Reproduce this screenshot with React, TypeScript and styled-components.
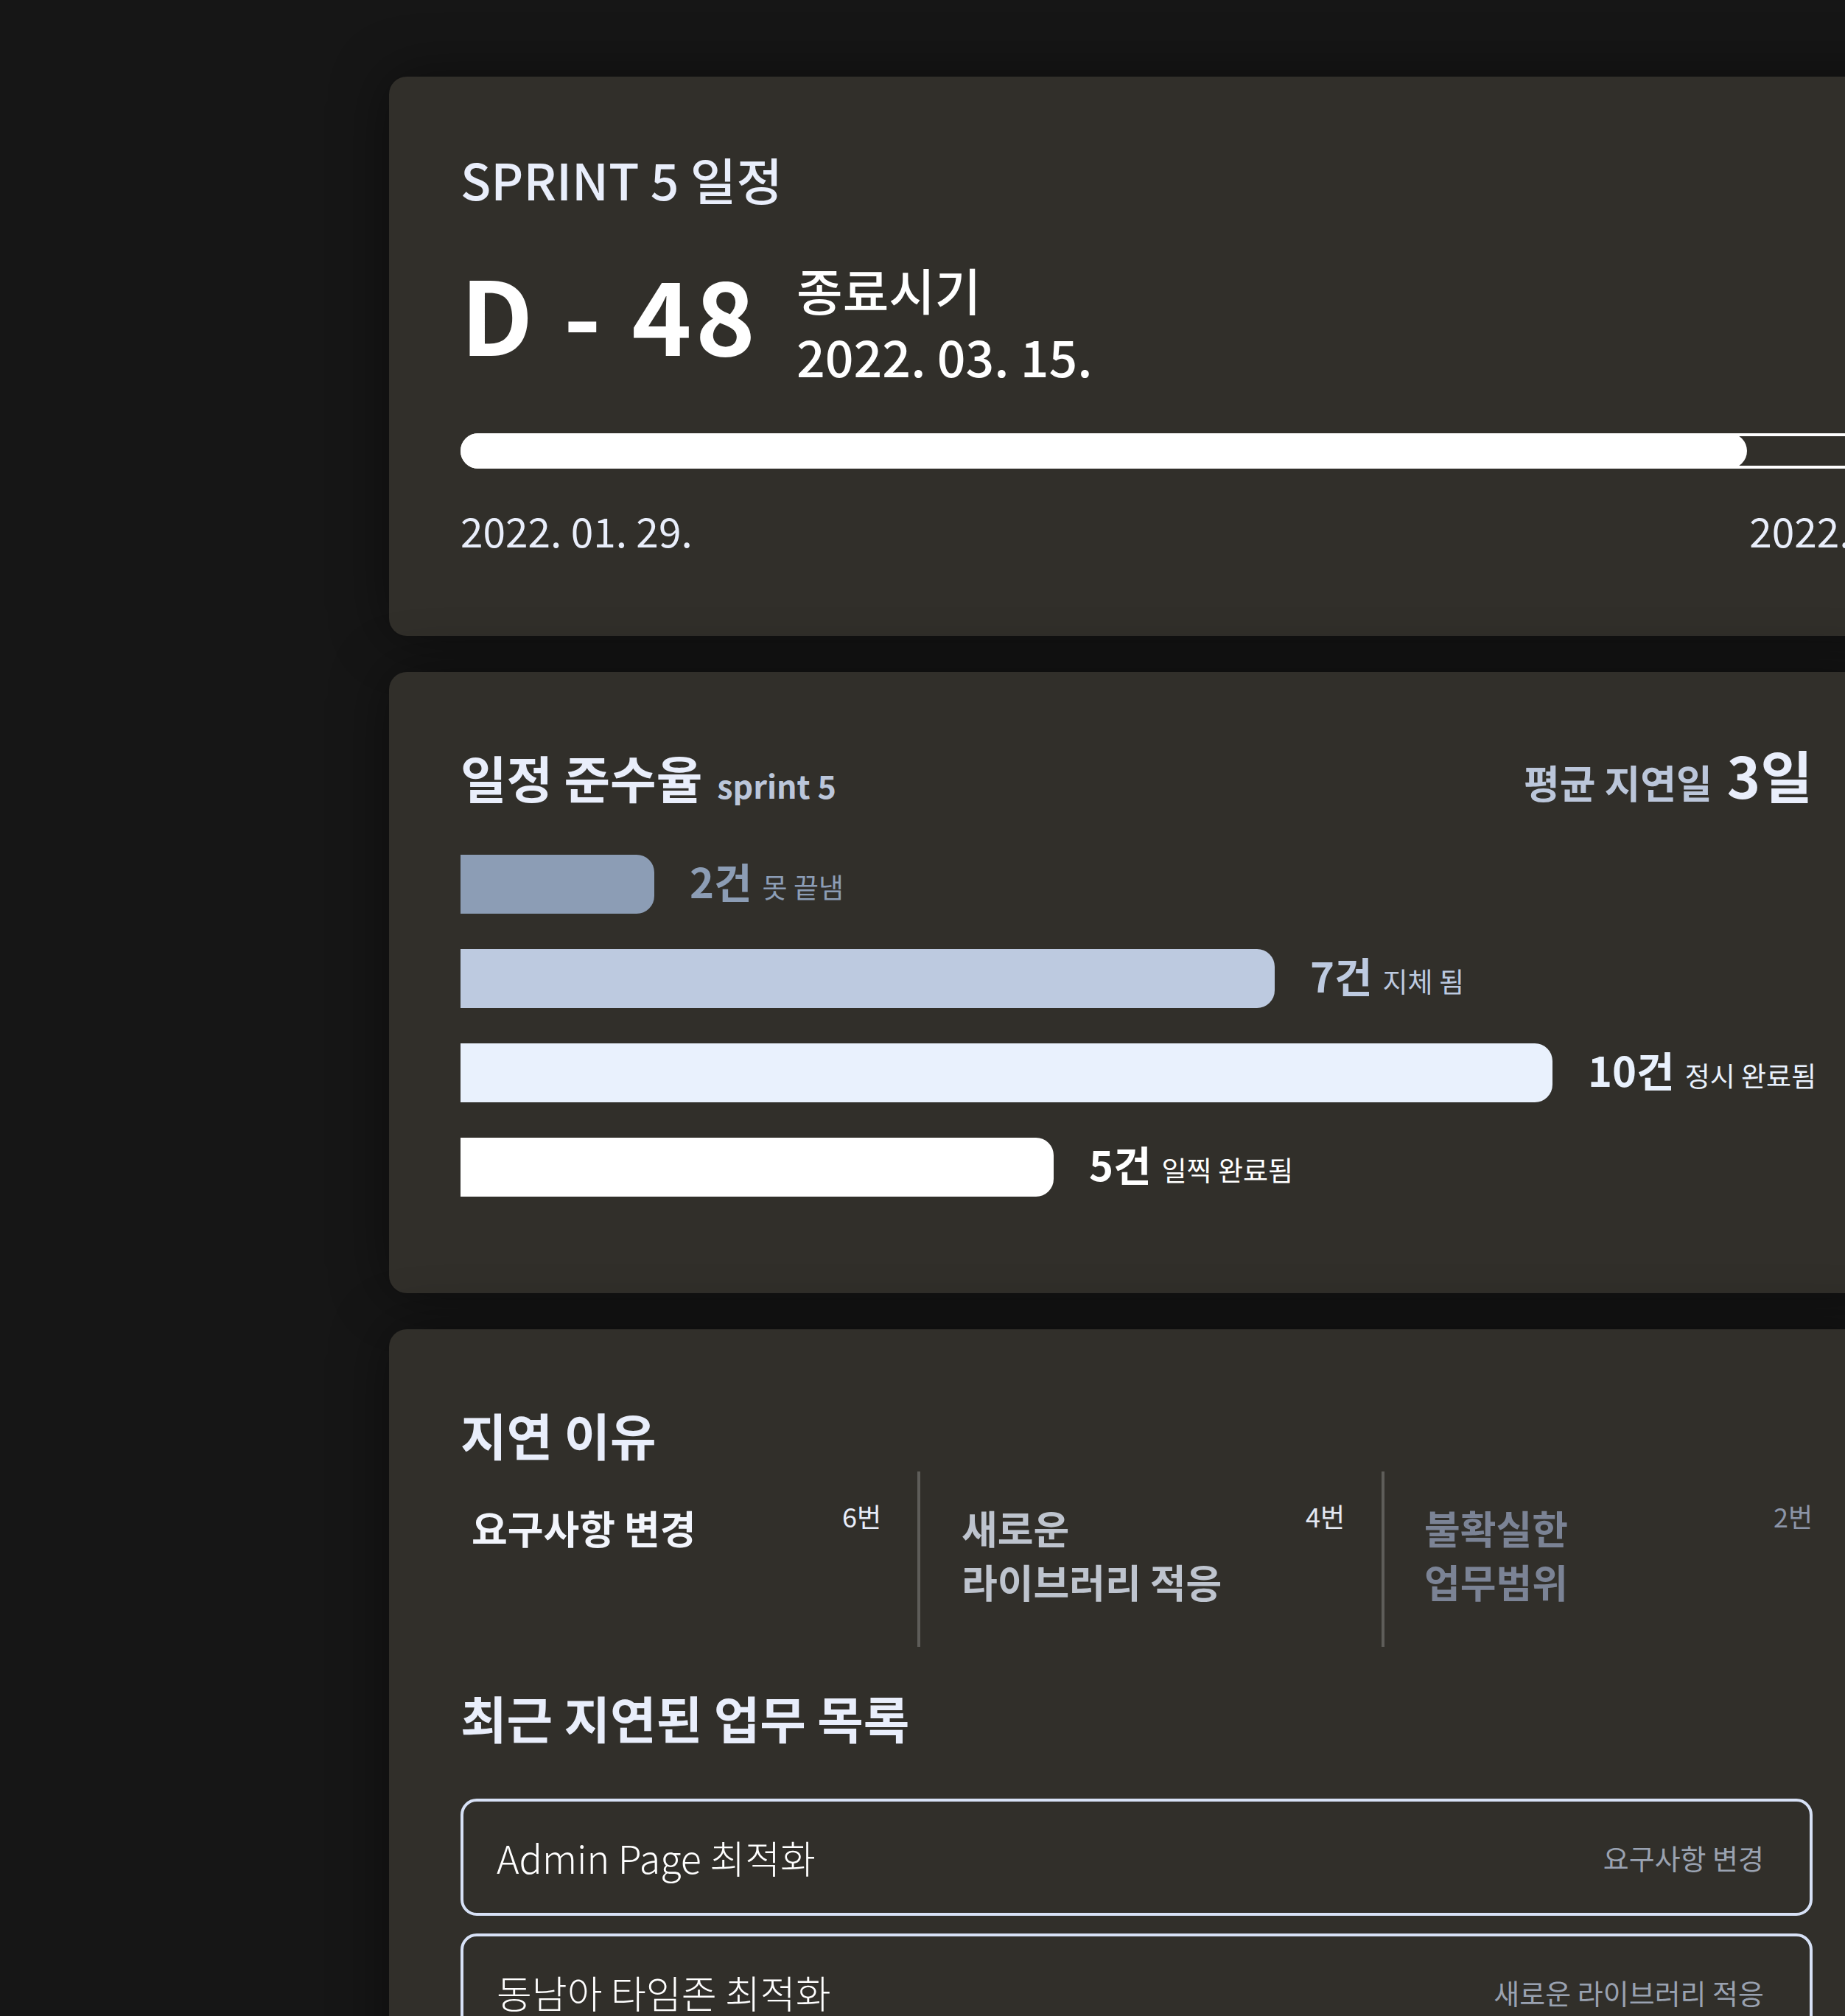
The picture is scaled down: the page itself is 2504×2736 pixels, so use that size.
import React from 'react';
import styled, { createGlobalStyle } from 'styled-components';

const GlobalStyle = createGlobalStyle`
    html, body {
        margin: 0;
        padding: 0;
        background: #161616;
        overflow: hidden;
    }
    body {
        font-family: "Noto Sans CJK KR", "Noto Sans", sans-serif;
    }
`;

interface BarItem {
    count: number;
    label: string;
    width: number;
    color: string;
}

interface Reason {
    lines: string[];
    count: number;
    color: string;
    countColor: string;
}

interface DelayedTask {
    title: string;
    reason: string;
}

const bars: BarItem[] = [
    { count: 2, label: '못 끝냄', width: 263, color: '#8c9db5' },
    { count: 7, label: '지체 됨', width: 1105, color: '#bdcae0' },
    { count: 10, label: '정시 완료됨', width: 1482, color: '#e9f1fd' },
    { count: 5, label: '일찍 완료됨', width: 805, color: '#ffffff' },
];

const reasons: Reason[] = [
    { lines: ['요구사항 변경'], count: 6, color: '#f2f5fc', countColor: '#e8edfa' },
    { lines: ['새로운', '라이브러리 적응'], count: 4, color: '#bec4ce', countColor: '#e3e8f2' },
    { lines: ['불확실한', '업무범위'], count: 2, color: '#7b8395', countColor: '#8c95a8' },
];

const tasks: DelayedTask[] = [
    { title: 'Admin Page 최적화', reason: '요구사항 변경' },
    { title: '동남아 타임존 최적화', reason: '새로운 라이브러리 적응' },
];

const Page = styled.div`
    display: flex;
    flex-direction: column;
    align-items: flex-start;
    gap: 49px;
    padding: 104px 0 0 528px;
    width: max-content;
`;

const Card = styled.section<{ $width: number; $padBottom: number }>`
    flex-shrink: 0;
    width: ${p => p.$width}px;
    padding: 98px 97px ${p => p.$padBottom}px;
    background: #312f2a;
    border-radius: 24px;
    box-shadow: 0 0 80px rgba(0, 0, 0, 0.45);
`;

/* ---- sprint schedule ---- */

const SprintTitle = styled.h2`
    margin: 0;
    font-size: 68px;
    line-height: 82px;
    font-weight: 500;
    color: #e9eefb;
`;

const CountdownRow = styled.div`
    display: flex;
    align-items: flex-start;
    gap: 51px;
    margin-top: 64px;
`;

const Countdown = styled.div`
    font-size: 138px;
    line-height: 150px;
    font-weight: 700;
    letter-spacing: 5px;
    color: #ffffff;
    white-space: pre;
`;

const EndBlock = styled.div`
    font-size: 68px;
    line-height: 90px;
    font-weight: 500;
    color: #ffffff;
`;

const Track = styled.div`
    display: flex;
    box-sizing: border-box;
    height: 48px;
    margin-top: 60px;
    border: 4px solid #ffffff;
    border-radius: 24px;
    background: #312f2a;
`;

const TrackFill = styled.div`
    height: 48px;
    margin: -4px 0 -4px -4px;
    border-radius: 24px;
    background: #ffffff;
`;

const DateRow = styled.div`
    display: flex;
    justify-content: space-between;
    margin-top: 50px;
    font-size: 55px;
    line-height: 66px;
    font-weight: 400;
    color: #e9eefb;
`;

/* ---- compliance ---- */

const HeaderRow = styled.div`
    display: flex;
    align-items: baseline;
    justify-content: space-between;
`;

const TitleGroup = styled.div`
    display: flex;
    align-items: baseline;
`;

const SectionTitle = styled.h2<{ $top?: number }>`
    margin: ${p => p.$top ?? 0}px 0 0;
    font-size: 68px;
    line-height: 89px;
    font-weight: 700;
    color: #e9eefb;
    white-space: nowrap;
`;

const SubTitle = styled.span`
    margin-left: 20px;
    font-size: 43px;
    line-height: 1;
    font-weight: 700;
    color: #bbc6da;
`;

const AvgGroup = styled.div`
    display: flex;
    align-items: baseline;
`;

const AvgLabel = styled.span`
    font-size: 53px;
    line-height: 1;
    font-weight: 700;
    color: #bbc6da;
`;

const AvgValue = styled.span`
    margin-left: 20px;
    font-size: 77px;
    line-height: 1;
    font-weight: 700;
    color: #e9eefb;
`;

const BarList = styled.div`
    display: flex;
    flex-direction: column;
    gap: 48px;
    margin-top: 61px;
`;

const BarRow = styled.div`
    display: flex;
    align-items: center;
`;

const Bar = styled.div<{ $color: string }>`
    flex-shrink: 0;
    height: 80px;
    border-radius: 0 24px 24px 0;
    background: ${p => p.$color};
`;

const BarLabel = styled.div<{ $color: string }>`
    display: flex;
    align-items: baseline;
    margin: 0 0 11px 48px;
    line-height: 1;
    color: ${p => p.$color};
    white-space: nowrap;
`;

const BarCount = styled.span`
    font-size: 56px;
    font-weight: 700;
`;

const BarText = styled.span`
    margin-left: 14px;
    font-size: 37px;
    font-weight: 400;
`;

/* ---- delay reasons ---- */

const ReasonGrid = styled.div`
    display: grid;
    grid-template-columns: 624px 630px 1fr;
    margin-top: 6px;
`;

const ReasonCol = styled.div<{ $padLeft: number; $padRight: number; $divider: boolean }>`
    display: flex;
    justify-content: space-between;
    align-items: flex-start;
    box-sizing: border-box;
    height: 238px;
    padding: 40px ${p => p.$padRight}px 0 ${p => p.$padLeft}px;
    border-right: ${p => (p.$divider ? '4px solid #5e5d59' : 'none')};
`;

const ReasonText = styled.div<{ $color: string }>`
    font-size: 53px;
    line-height: 73px;
    font-weight: 700;
    color: ${p => p.$color};
    white-space: nowrap;
`;

const ReasonCount = styled.div<{ $color: string }>`
    margin-top: 2px;
    font-size: 36px;
    line-height: 1;
    font-weight: 400;
    color: ${p => p.$color};
    white-space: nowrap;
`;

const TaskList = styled.div`
    display: flex;
    flex-direction: column;
    gap: 24px;
    margin-top: 66px;
`;

const TaskItem = styled.div`
    display: flex;
    align-items: center;
    justify-content: space-between;
    box-sizing: border-box;
    height: 159px;
    padding: 0 62px 0 45px;
    border: 4px solid #d7e1f6;
    border-radius: 22px;
`;

const TaskTitle = styled.span`
    font-size: 52px;
    font-weight: 300;
    color: #ffffff;
`;

const TaskReason = styled.span`
    font-size: 38px;
    font-weight: 400;
    color: #9aa2b1;
`;

const reasonPads = [
    { left: 15, right: 49 },
    { left: 56, right: 50 },
    { left: 54, right: 0 },
];

export default function App() {
    // elapsed share of the sprint, as drawn in the reference
    const progress = 0.8475;

    return (
        <>
            <GlobalStyle />
            <Page>
                <Card $width={2064} $padBottom={111}>
                    <SprintTitle>SPRINT 5 일정</SprintTitle>
                    <CountdownRow>
                        <Countdown>D - 48</Countdown>
                        <EndBlock>
                            <div>종료시기</div>
                            <div>2022. 03. 15.</div>
                        </EndBlock>
                    </CountdownRow>
                    <Track>
                        <TrackFill style={{ width: `calc(${progress * 100}% + 4px)` }} />
                    </Track>
                    <DateRow>
                        <span>2022. 01. 29.</span>
                        <span>2022. 03. 15.</span>
                    </DateRow>
                </Card>

                <Card $width={1835} $padBottom={131}>
                    <HeaderRow>
                        <TitleGroup>
                            <SectionTitle>일정 준수율</SectionTitle>
                            <SubTitle>sprint 5</SubTitle>
                        </TitleGroup>
                        <AvgGroup>
                            <AvgLabel>평균 지연일</AvgLabel>
                            <AvgValue>3일</AvgValue>
                        </AvgGroup>
                    </HeaderRow>
                    <BarList>
                        {bars.map(bar => (
                            <BarRow key={bar.label}>
                                <Bar $color={bar.color} style={{ width: bar.width }} />
                                <BarLabel $color={bar.color}>
                                    <BarCount>{bar.count}건</BarCount>
                                    <BarText>{bar.label}</BarText>
                                </BarLabel>
                            </BarRow>
                        ))}
                    </BarList>
                </Card>

                <Card $width={1835} $padBottom={98}>
                    <SectionTitle>지연 이유</SectionTitle>
                    <ReasonGrid>
                        {reasons.map((r, i) => (
                            <ReasonCol
                                key={r.lines.join(' ')}
                                $padLeft={reasonPads[i].left}
                                $padRight={reasonPads[i].right}
                                $divider={i < reasons.length - 1}
                            >
                                <ReasonText $color={r.color}>
                                    {r.lines.map(line => (
                                        <div key={line}>{line}</div>
                                    ))}
                                </ReasonText>
                                <ReasonCount $color={r.countColor}>{r.count}번</ReasonCount>
                            </ReasonCol>
                        ))}
                    </ReasonGrid>
                    <SectionTitle $top={51}>최근 지연된 업무 목록</SectionTitle>
                    <TaskList>
                        {tasks.map(t => (
                            <TaskItem key={t.title}>
                                <TaskTitle>{t.title}</TaskTitle>
                                <TaskReason>{t.reason}</TaskReason>
                            </TaskItem>
                        ))}
                    </TaskList>
                </Card>
            </Page>
        </>
    );
}
